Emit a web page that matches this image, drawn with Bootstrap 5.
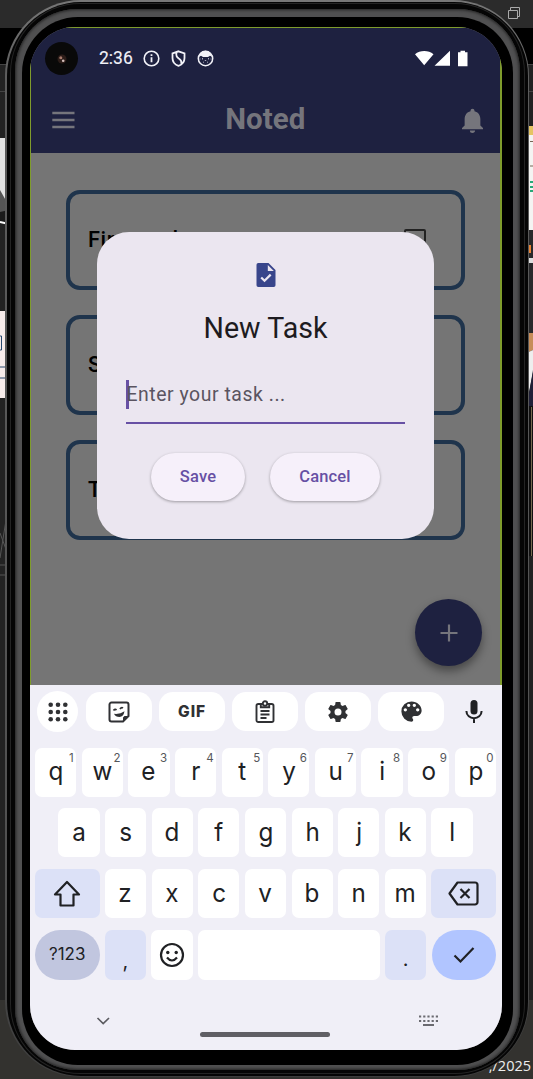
<!DOCTYPE html>
<html lang="en">
<head>
<meta charset="utf-8">
<meta name="viewport" content="width=device-width, initial-scale=1">
<title>Noted</title>
<link href="https://cdn.jsdelivr.net/npm/bootstrap@5.3.0/dist/css/bootstrap.min.css" rel="stylesheet">
<style>
html,body{height:1079px;overflow:hidden}
body{background:#222;font-family:Roboto,sans-serif;position:relative;color:#1d1b20}
svg{display:block;flex:none}
.desk{position:absolute;inset:0;z-index:0}
.date-text{position:absolute;right:2px;bottom:4px;font:14.5px/18px "Open Sans",sans-serif;color:#eee;z-index:0}
.phone{position:relative;z-index:1;margin:0 4px 0 5px;height:1077px;padding:1.5px;border-radius:76px;background:linear-gradient(#777,#5c5c5c 80px,#505050 900px,#3c3c3c)}
.rim{height:100%;padding:1.5px 2.5px 1.5px 3.5px;border-radius:74px;background:#050505}
.rim2{height:100%;padding:1px;border-radius:70px;background:#242424}
.rim3{height:100%;padding:5px 4px 3px;border-radius:69px;background:#050505}
.metal{height:100%;padding:8px 7px 5px;border-radius:62px;background:#505051;box-shadow:inset 0 0 3px 1px #222}
.glass{height:100%;padding:10px 11px 16px 8px;border-radius:56px;background:#000}
.screen{height:1023px;width:472px;border-radius:45px;background:#757575;overflow:hidden}
.app{height:658px;position:relative;border:solid #7f9c2c;border-width:1px 2px 0 1px}
.topbar{height:125px;background:#1e2140}
.status{height:61px;padding:0 31px 0 14px}
.cam{width:33px;height:33px;background:#090909}
.clock{font-size:17.5px;font-weight:400;color:#f2f2f8;margin-left:21px;width:44px;-webkit-text-stroke:.1px #f2f2f8}
.bar{height:62px;padding:0 17px 0 18px}
.brand{font-size:29.5px;font-weight:700;color:#75757c;line-height:1;margin-right:10.5px}
.tasks{padding:37px 35px 0 35px}
.task{height:100px;border:4px solid #1f344c;border-radius:14px;padding:0 35px 0 18px;margin-bottom:25px;font-size:21.7px;font-weight:500;letter-spacing:.65px;color:#000}
.box{width:22px;height:22px;border:2.5px solid #222;border-radius:2px}
.dlg{position:absolute;left:66px;top:204px;width:337px;height:307px;border-radius:32px;background:#ebe6f0;padding:30px 29px 0}
.dlg h1{font-size:28.6px;font-weight:400;margin:20px 0 0;line-height:40px}
.entry{height:46px;border-bottom:2.5px solid #6750a4;font-size:19.4px;letter-spacing:.55px;color:#5a5460;margin-top:30px}
.entry i{width:2.5px;height:29px;background:#6750a4;margin-right:-2px;margin-top:2px}
.entry span{line-height:34px}
.pill{height:48px;border-radius:24px;background:#f6f0fa;color:#6750a4;font-size:16.5px;font-weight:500;letter-spacing:.15px;box-shadow:0 1px 3px #0005;border:0;padding:0}
.fab{position:absolute;left:384px;top:571px;width:67px;height:67px;background:#1e2140;box-shadow:0 5px 10px #0006}
.kb{height:365px;background:#f0eff7;color:#202124}
.tools{height:51px;padding:2px 0 0 7px}
.tool{width:66px;height:39px;border-radius:14px;background:#fff;margin-right:7px}
.round-tool{width:41px;height:41px;background:#fff;margin-right:8px}
.gif{font:800 15.5px/1 Inter,sans-serif;letter-spacing:.9px;color:#303134}
.keys{padding:11.5px 6px 0 5px;display:flex;flex-direction:column;gap:11.8px}
.krow{display:flex;gap:5.4px;height:49px}
.key{flex:1;border-radius:7px;background:#fff;display:flex;align-items:center;justify-content:center;position:relative;font:400 25.5px/1 Inter,sans-serif}
.key b{line-height:32px;font-weight:400;margin-top:-2px;transform:scaleX(.95)}
.key sup{position:absolute;right:2.5px;top:4px;font:400 11.5px/12px Inter,sans-serif;color:#55565a}
.wide{flex:0 0 64.5px}.tint{background:#dce1f7}
.nav-strip{height:70px;position:relative}
.home{position:absolute;left:170px;top:52.5px;width:130px;height:5px;border-radius:3px;background:#605f65}
</style>
</head>
<body>
<svg class="desk" width="533" height="1079">
<rect width="533" height="28" fill="#2b2b2b"/><rect y="28" width="533" height="36" fill="#000"/>
<path d="M0 64.5H533M0 91.5H533" stroke="#444"/>
<rect y="138" width="9" height="82" fill="#e4e4e4"/><path d="M0 190L9 206V222H0Z" fill="#555"/><path d="M0 212L9 210V222H0Z" fill="#1a1a1a"/><path d="M0 222L9 224" stroke="#fff" stroke-width="2"/>
<rect y="311" width="9" height="87" fill="#f6ebea"/><path d="M0 336H1.500V350H0M0 367H6M0 378H6" fill="none" stroke="#28486e"/>
<path d="M0 558L6 520M0 533L7 552M0 565H8M0 575H8" stroke="#555" fill="none"/>
<rect y="1000" width="533" height="79" fill="#33322f"/>
<rect x="524" y="126" width="9" height="9" fill="#e5c463"/><rect x="524" y="135" width="9" height="95" fill="#f4f4f2"/><path d="M530 141.500H533M530 166H533" stroke="#765"/>
<path d="M530 182h3M530 187h3M530 191h3" stroke="#28a878" stroke-width="2"/>
<rect x="524" y="230" width="9" height="103" fill="#29292b"/><path d="M530 245V253" stroke="#e88334" stroke-width="2"/><rect x="524" y="258" width="9" height="5" fill="#ddd"/>
<path d="M524 333H533V350L524 354Z" fill="#c78d59"/><path d="M524 354L533 350V372L529 392H524Z" fill="#eee"/><path d="M533 370V406H527Z" fill="#202038"/>
<rect x="524" y="406" width="9" height="150" fill="#111"/><path d="M531.500 407V556" stroke="#766b50"/>
<path d="M508.500 10.500h9v8h-9zM510.500 10V7.500h9v9H518" fill="none" stroke="#aaa"/>
</svg>
<div class="date-text">,/2025</div>
<div class="phone"><div class="rim"><div class="rim2"><div class="rim3"><div class="metal"><div class="glass">
<main class="screen">
<section class="app">
<header class="topbar">
<div class="status d-flex align-items-center">
<div class="cam rounded-circle d-flex align-items-center justify-content-center"><svg width="12" height="12"><circle cx="6" cy="6" r="4.500" fill="#2b1c18"/><circle cx="4.800" cy="4.800" r="1.500" fill="#a87b6d"/><circle cx="7.200" cy="7.800" r="1.300" fill="#d5c0bc"/></svg></div>
<div class="clock">2:36</div>
<svg width="17" height="17" viewBox="0 0 17 17" fill="none" stroke="#f2f2f8" stroke-width="1.600"><circle cx="8.500" cy="8.500" r="7.300"/><path d="M8.500 7.300v5M8.500 4.300v1.800" stroke-width="1.800"/></svg>
<svg style="margin-left:10px" width="17" height="17" viewBox="0 0 17 17" fill="none" stroke="#f2f2f8" stroke-width="1.800"><path d="M8.500 1.300L14.500 3.400V8c0 4-2.400 6.700-6 7.800C4.900 14.700 2.500 12 2.500 8V3.400zM6.500 2.500Q5.500 6.500 8.800 8.500 11.800 10.200 11.500 14"/></svg>
<svg style="margin-left:10px" width="17" height="17" viewBox="0 0 17 17"><circle cx="8.500" cy="8.500" r="7.200" fill="none" stroke="#f2f2f8" stroke-width="1.500"/><path d="M1.500 7L3.600 2.700A8 8 0 0 1 13.400 2.700L15.500 7 13 5.700 11 7H6L4 5.700z" fill="#f2f2f8"/><path d="M5.500 8v1.500M11.500 8v1.500M7.800 10.500h1.400M6 12.500l1-.6M11 12.500l-1-.6M2.500 9h1M13.500 9h1" stroke="#a8a9ba" stroke-width="1"/></svg>
<svg class="ms-auto" width="54" height="17" viewBox="0 0 54 17" fill="#fff"><path d="M0 4.200C5 0 13.500 0 18.500 4.200L9.200 15.300zM19.500 15.700L35 .8V15.700zM43 2.300h2.500V.8h4.500v1.500h2.500V16.300H43z"/></svg>
</div>
<div class="bar d-flex align-items-center justify-content-between">
<svg width="30" height="24" viewBox="0 0 30 24" stroke="#75757c" stroke-width="2.300"><path d="M3.300 5H25.500M3.300 12H25.500M3.300 19H25.500"/></svg>
<span class="brand">Noted</span>
<svg width="21" height="25" viewBox="4 2 16 20" fill="#75757c" preserveAspectRatio="none"><path d="M12 22c1.100 0 2-.9 2-2h-4a2 2 0 0 0 2 2zm6-6v-5c0-3.070-1.640-5.640-4.500-6.320V4a1.500 1.500 0 0 0-3 0v.68C7.630 5.360 6 7.920 6 11v5l-2 2v1h16v-1z"/></svg>
</div>
</header>
<div class="tasks">
<div class="task d-flex align-items-center justify-content-between"><span>First task</span><i class="box"></i></div>
<div class="task d-flex align-items-center"><span>Second</span></div>
<div class="task d-flex align-items-center"><span>Third</span></div>
</div>
<button class="fab btn rounded-circle p-0 border-0 d-flex align-items-center justify-content-center"><svg width="18" height="18" stroke="#75757c" stroke-width="2.200"><path d="M9 .5v17M.5 9h17"/></svg></button>
<div class="dlg" role="dialog">
<svg class="mx-auto" width="20" height="26" viewBox="0 0 20 26"><path d="M2.300 1h10.200L19.500 8v15.200a1.800 1.800 0 0 1-1.800 1.800H2.300A1.800 1.800 0 0 1 .5 23.200V2.800A1.800 1.800 0 0 1 2.300 1z" fill="#38458b"/><path d="M11.800 3v6h6z" fill="#ebe6f0"/><path d="M5.200 15.500l3.300 3.300 6.200-6.200" stroke="#ebe6f0" stroke-width="2.200" fill="none"/></svg>
<h1 class="text-center">New Task</h1>
<div class="entry d-flex align-items-start"><i></i><span>Enter your task ...</span></div>
<div class="d-flex justify-content-center" style="gap:25px;margin-top:29px"><button class="pill" style="width:94px">Save</button><button class="pill" style="width:110px">Cancel</button></div>
</div>
</section>
<section class="kb">
<div class="tools d-flex align-items-center">
<div class="round-tool rounded-circle d-flex align-items-center justify-content-center"><svg width="20" height="20" fill="#303134"><g id="r"><circle cx="2.700" cy="2.700" r="2.300"/><circle cx="10" cy="2.700" r="2.300"/><circle cx="17.300" cy="2.700" r="2.300"/></g><use href="#r" y="7.300"/><use href="#r" y="14.600"/></svg></div>
<div class="tool d-flex align-items-center justify-content-center"><svg width="22" height="22" viewBox="0 0 22 22" fill="none" stroke="#303134" stroke-width="2"><path d="M3.500 1.500h15a2 2 0 0 1 2 2V15l-5.500 5.500H3.500a2 2 0 0 1-2-2v-15a2 2 0 0 1 2-2z"/><path d="M20.500 15.500H17a1.500 1.500 0 0 0-1.500 1.500v3.500z" fill="#303134" stroke-width="1"/><path d="M5.500 9.500Q7 7.700 8.500 9M12 8Q13.500 6 15 7" stroke-width="1.800"/><path d="M6 12.800Q12 13.500 16.500 10.300 15.500 15.800 11.500 16 7.500 16 6 12.800z" fill="#303134" stroke="none"/></svg></div>
<div class="tool d-flex align-items-center justify-content-center"><span class="gif">GIF</span></div>
<div class="tool d-flex align-items-center justify-content-center"><svg width="20" height="24" viewBox="0 0 20 24" fill="none" stroke="#303134" stroke-width="1.900"><rect x="1.500" y="4" width="17" height="18" rx="1.800"/><path d="M5.800 4v3.200h8.400V4M5.500 11h9M5.500 14.500h9M5.500 18h6"/><circle cx="10" cy="3.500" r="2.200" fill="#fff"/></svg></div>
<div class="tool d-flex align-items-center justify-content-center"><svg width="24" height="24" viewBox="0 0 24 24" fill="#303134"><path d="M19.430 12.980c.04-.32.070-.64.070-.98s-.03-.66-.07-.98l2.110-1.650c.19-.15.240-.42.120-.64l-2-3.460c-.12-.22-.39-.3-.61-.22l-2.490 1c-.52-.4-1.080-.73-1.690-.98l-.38-2.650A.49.490 0 0 0 14 2h-4c-.25 0-.46.180-.49.420l-.38 2.650c-.61.250-1.170.59-1.690.98l-2.490-1c-.23-.09-.49 0-.61.220l-2 3.460c-.13.220-.07.490.120.640l2.110 1.650c-.04.320-.07.650-.07.980s.03.660.070.980l-2.110 1.650c-.19.150-.24.420-.12.640l2 3.460c.12.220.39.300.61.220l2.490-1c.52.400 1.080.73 1.690.98l.38 2.650c.03.240.24.420.49.420h4c.25 0 .46-.18.490-.42l.38-2.650c.61-.25 1.170-.59 1.690-.98l2.490 1c.23.090.49 0 .61-.22l2-3.460c.12-.22.070-.49-.12-.64zM12 15.500a3.500 3.500 0 1 1 0-7 3.500 3.500 0 0 1 0 7z"/></svg></div>
<div class="tool d-flex align-items-center justify-content-center"><svg width="27" height="27" viewBox="0 0 24 24" fill="#303134"><path d="M12 3a9 9 0 0 0 0 18c.83 0 1.500-.67 1.500-1.500 0-.39-.15-.74-.39-1.010-.23-.26-.38-.61-.38-.99 0-.83.67-1.500 1.500-1.500H16c2.760 0 5-2.240 5-5 0-4.420-4.030-8-9-8zm-5.500 9a1.500 1.500 0 1 1 0-3 1.500 1.500 0 0 1 0 3zm3-4a1.500 1.500 0 1 1 0-3 1.500 1.500 0 0 1 0 3zm5 0a1.500 1.500 0 1 1 0-3 1.500 1.500 0 0 1 0 3zm3 4a1.500 1.500 0 1 1 0-3 1.500 1.500 0 0 1 0 3z"/></svg></div>
<svg style="margin-left:13.500px" width="18" height="25" viewBox="0 0 18 25"><rect x="5.500" y="1" width="7" height="14.500" rx="3.500" fill="#202124"/><path d="M1.400 12C1.400 21.500 16.600 21.500 16.600 12M9 19v5" fill="none" stroke="#202124" stroke-width="2"/></svg>
</div>
<div class="keys">
<div class="krow"><div class="key"><b>q</b><sup>1</sup></div><div class="key"><b>w</b><sup>2</sup></div><div class="key"><b>e</b><sup>3</sup></div><div class="key"><b>r</b><sup>4</sup></div><div class="key"><b>t</b><sup>5</sup></div><div class="key"><b>y</b><sup>6</sup></div><div class="key"><b>u</b><sup>7</sup></div><div class="key"><b>i</b><sup>8</sup></div><div class="key"><b>o</b><sup>9</sup></div><div class="key"><b>p</b><sup>0</sup></div></div>
<div class="krow" style="padding:0 23.300px"><div class="key"><b>a</b></div><div class="key"><b>s</b></div><div class="key"><b>d</b></div><div class="key"><b>f</b></div><div class="key"><b>g</b></div><div class="key"><b>h</b></div><div class="key"><b>j</b></div><div class="key"><b>k</b></div><div class="key"><b>l</b></div></div>
<div class="krow"><div class="key wide tint"><svg width="28" height="28" viewBox="0 0 28 28" fill="none" stroke="#202124" stroke-width="2.200" stroke-linejoin="round"><path d="M14 2L26 14.500H20.500V25.500H7.500V14.500H2z"/></svg></div><div class="key"><b>z</b></div><div class="key"><b>x</b></div><div class="key"><b>c</b></div><div class="key"><b>v</b></div><div class="key"><b>b</b></div><div class="key"><b>n</b></div><div class="key"><b>m</b></div><div class="key wide tint"><svg width="31" height="25" viewBox="0 0 31 25" fill="none" stroke="#202124" stroke-width="2.200" stroke-linejoin="round"><path d="M9.500 1.500H27A2.500 2.500 0 0 1 29.500 4V21A2.500 2.500 0 0 1 27 23.500H9.500L1.500 12.500zM12.500 8L21.500 17M21.500 8L12.500 17"/></svg></div></div>
<div class="krow" style="height:50px"><div class="key wide rounded-pill" style="background:#c1c6df;font-size:17px">?123</div><div class="key tint" style="flex:0 0 41.200px;font-size:20px;padding-top:12px">,</div><div class="key" style="flex:0 0 41.200px"><svg width="26" height="26" viewBox="0 0 26 26" fill="none" stroke="#202124" stroke-width="2.200"><circle cx="13" cy="13" r="11"/><path d="M8 15.500Q13 21.500 18 15.500"/><circle cx="8.800" cy="10.500" r="1.700" fill="#202124" stroke="none"/><circle cx="17.200" cy="10.500" r="1.700" fill="#202124" stroke="none"/></svg></div><div class="key"></div><div class="key tint" style="flex:0 0 41.200px;font-size:20px;padding-top:8px">.</div><div class="key wide rounded-pill" style="background:#b1c5ff"><svg width="22" height="18" viewBox="0 0 22 18" fill="none" stroke="#202124" stroke-width="2.200"><path d="M1.500 9.500L7.500 15.500 20.500 2"/></svg></div></div>
</div>
<div class="nav-strip">
<svg width="472" height="70" fill="none"><path d="M67.500 38l5.700 5.500L79 38" stroke="#5b5b60" stroke-width="1.700"/><path d="M389 36.500H408M389 41H408" stroke="#6a6a70" stroke-width="2.200" stroke-dasharray="2.200 2"/><path d="M393 45H404" stroke="#6a6a70" stroke-width="2"/></svg>
<div class="home"></div>
</div>
</section>
</main>
</div></div></div></div></div></div>
<script src="https://cdn.jsdelivr.net/npm/bootstrap@5.3.0/dist/js/bootstrap.bundle.min.js"></script>
</body>
</html>
